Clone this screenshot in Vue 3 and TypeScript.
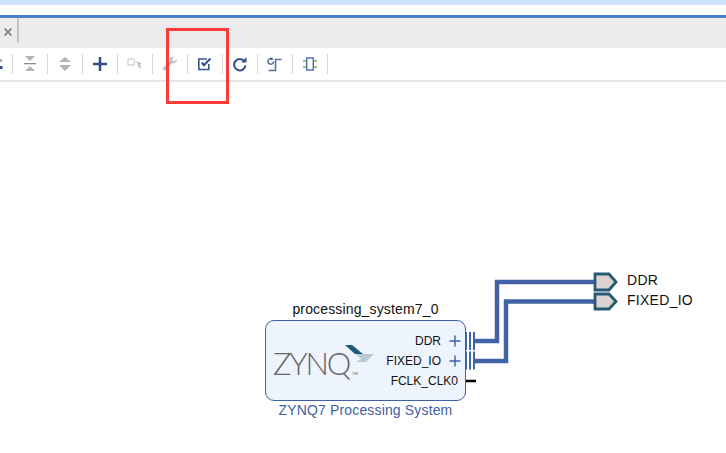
<script setup lang="ts">
</script>

<template>
  <div class="page">
    <div class="top-band"></div>
    <div class="top-gap"></div>
    <div class="accent"></div>
    <div class="tabbar">
      <div class="tab">
        <svg class="close" width="10" height="10" viewBox="0 0 10 10"><path d="M1.500 1.500l7 7M8.500 1.500l-7 7" stroke="#777" stroke-width="1.600" fill="none"/></svg>
      </div>
    </div>
    <div class="toolbar">
      <div class="btn first">
        <svg width="24" height="20" viewBox="0 0 24 20"><path d="M17 5h2v3h-2z" fill="#9fb0cc"/><path d="M17 12h2.500l0 3H17z" fill="#2e4f86"/></svg>
      </div>
      <div class="btn">
        <svg width="14" height="18" viewBox="0 0 14 18"><path d="M2 1h10L7 6zM7 11l5 5H2z" fill="#b4b4b4"/><path d="M1 8h12v1.300H1z" fill="#8d8d8d"/></svg>
      </div>
      <div class="btn">
        <svg width="14" height="18" viewBox="0 0 14 18"><path d="M7 2l6 5H1zM1 10h12L7 16z" fill="#b4b4b4"/></svg>
      </div>
      <div class="btn">
        <svg width="16" height="16" viewBox="0 0 16 16"><path d="M6.700 1h2.600v5.700h5.700v2.600H9.300V15H6.700V9.300H1V6.700h5.700z" fill="#2e4f86"/></svg>
      </div>
      <div class="btn">
        <svg width="16" height="14" viewBox="0 0 16 14"><rect x="1" y="2" width="6" height="6" fill="#fff" stroke="#c4c4c4"/><path d="M8 5h3" stroke="#ccc"/><path d="M10 5l5 1-2 1 1 4-2 0-1-3z" fill="#c0c0c0"/></svg>
      </div>
      <div class="btn">
        <svg width="16" height="16" viewBox="0 0 16 16"><path d="M15 3.500l-2.800 2-2-.8.200-2.400 1.800-1.300C9.900.4 8 1.300 7.800 3.100c-.1.800.1 1.300.3 1.800L1.500 11.200c-.8.800-.8 1.900-.1 2.600.8.800 1.800.6 2.500-.1l6-6.600c.6.200 1.100.3 1.800.2C13.700 7 15.100 5.500 15 3.500z" fill="#bdbdbd"/></svg>
      </div>
      <div class="btn">
        <svg width="16" height="14" viewBox="0 0 16 14"><path d="M10 2H1.800v10.500h10V7" fill="none" stroke="#3a568c" stroke-width="1.600"/><path d="M4.800 5.500l2.200 2.700L13.500 1.500" fill="none" stroke="#2e4f86" stroke-width="2"/></svg>
      </div>
      <div class="btn">
        <svg width="16" height="16" viewBox="0 0 16 16"><path d="M12.300 5.200A5.700 5.700 0 1 0 13.500 9.300" fill="none" stroke="#2e4f86" stroke-width="2"/><path d="M9.200 6.400h5.300V1z" fill="#2e4f86"/></svg>
      </div>
      <div class="btn">
        <svg width="16" height="16" viewBox="0 0 16 16"><path d="M1.500 14.500h7V3.500h6" fill="none" stroke="#5470a5" stroke-width="1.600"/><path d="M5.800 3.500A2.800 2.800 0 1 0 6.500 5.500" fill="none" stroke="#3d5a8f" stroke-width="1.300"/><path d="M3.600 1l2.600 2-2.600 1.500z" fill="#3d5a8f"/></svg>
      </div>
      <div class="btn">
        <svg width="16" height="14" viewBox="0 0 16 14"><path d="M1 4h14M1 10h14" stroke="#5cb66a" stroke-width="1.600"/><rect x="4.700" y="1" width="6.600" height="12" fill="#fff" stroke="#5470a5" stroke-width="1.400"/></svg>
      </div>
    </div>
    <div class="rule"></div>
    <div class="canvas">
      <svg class="wires" width="726" height="372" viewBox="0 81 726 372">
        <path d="M474 340H497V281H595" fill="none" stroke="#4163a5" stroke-width="4.500"/>
        <path d="M474 360H506V300.500H595" fill="none" stroke="#4163a5" stroke-width="4.500"/>
        <path d="M466 331v18M470 331v18M474 331v18M466 350.500v18M470 350.500v18M474 350.500v18" stroke="#3f66a6" stroke-width="2"/>
        <path d="M466 380h10" stroke="#000" stroke-width="2.500"/>
        <path d="M595 273h14l7 8-7 8h-14z" fill="#dbd3d0" stroke="#245a73" stroke-width="2.800"/>
        <path d="M595 293h14l7 7.500-7 7.500h-14z" fill="#dbd3d0" stroke="#245a73" stroke-width="2.800"/>
      </svg>
      <span class="ext-label ddr">DDR</span>
      <span class="ext-label fixed">FIXED_IO</span>
      <div class="ip">
        <div class="ip-name">processing_system7_0</div>
        <div class="ip-box">
          <div class="logo">
            <span class="logo-word">ZYNQ</span>
            <span class="tm">TM</span>
            <svg class="logo-mark" width="32" height="22" viewBox="0 0 32 22"><path d="M1 0h7l11 9h-8z" fill="#1f5a7a"/><path d="M12 9h18l-8 8H12l6-4h-2z" fill="#b9c9d3"/></svg>
          </div>
          <div class="pins">
            <div class="pin"><span>DDR</span><svg width="12" height="12" viewBox="0 0 12 12"><path d="M6 .5v11M.5 6h11" stroke="#3f60a3" stroke-width="1.400"/></svg></div>
            <div class="pin"><span>FIXED_IO</span><svg width="12" height="12" viewBox="0 0 12 12"><path d="M6 .5v11M.5 6h11" stroke="#3f60a3" stroke-width="1.400"/></svg></div>
            <div class="pin plain"><span>FCLK_CLK0</span></div>
          </div>
        </div>
        <div class="ip-title">ZYNQ7 Processing System</div>
      </div>
    </div>
    <div class="highlight"></div>
  </div>
</template>

<style>
html, body { margin: 0; background: #fff; overflow: hidden; }
</style>

<style scoped>
.page {
  position: relative;
  width: 726px;
  height: 453px;
  overflow: hidden;
  background: #fff;
  font-family: "Liberation Sans", Arial, sans-serif;
  display: flex;
  flex-direction: column;
}
.top-band { height: 5px; background: #cfe0fb; }
.top-gap { height: 10px; background: #fff; }
.accent { height: 3px; background: #4a7fcb; }
.tabbar { height: 30px; background: #ececec; display: flex; }
.tab {
  width: 17px;
  height: 25px;
  border-right: 2px solid #c4c4c4;
  display: flex;
  align-items: center;
  justify-content: flex-end;
}
.close { margin: 3px 4px 0 0; }
.toolbar {
  height: 32px;
  display: flex;
  margin-left: -22px;
  align-items: flex-start;
  padding-top: 6px;
  box-sizing: border-box;
}
.btn {
  width: 35px;
  height: 20px;
  flex: none;
  box-sizing: border-box;
  border-right: 1px solid #d8d8d8;
  display: flex;
  align-items: center;
  justify-content: center;
}
.rule { height: 2px; background: #e6e6e6; }
.canvas { position: relative; flex: 1; }
.wires { position: absolute; left: 0; top: 0; }
.ext-label {
  position: absolute;
  left: 627px;
  font-size: 14px;
  line-height: 15px;
  color: #111;
  letter-spacing: .28px;
}
.ddr { top: 191px; }
.fixed { top: 211px; }
.ip { position: absolute; left: 265px; top: 219px; width: 201px; }
.ip-name {
  text-align: center;
  font-size: 14px;
  line-height: 16px;
  height: 19px;
  color: #111;
  letter-spacing: .15px;
}
.ip-box {
  box-sizing: border-box;
  height: 81px;
  background: #eef4fd;
  border: 1px solid #3f60a3;
  border-radius: 9px;
  display: flex;
  justify-content: space-between;
}
.logo { position: relative; width: 100px; }
.logo-word {
  position: absolute;
  left: 7px;
  top: 24px;
  font-family: Lato, "Liberation Sans", sans-serif;
  font-weight: 300;
  font-size: 31px;
  line-height: 36px;
  color: #666;
  letter-spacing: -2.200px;
}
.tm { position: absolute; left: 86px; top: 51px; font-size: 4px; line-height: 4px; color: #666; }
.logo-mark { position: absolute; left: 78px; top: 24px; }
.pins { padding: 10px 4px 0 0; display: flex; flex-direction: column; }
.pin {
  height: 20px;
  display: flex;
  align-items: center;
  justify-content: flex-end;
  gap: 8px;
  font-size: 12px;
  color: #111;
}
.pin.plain { padding-right: 3px; }
.ip-title {
  text-align: center;
  font-size: 14px;
  line-height: 16px;
  color: #3f60a3;
  letter-spacing: .15px;
  margin-top: 1px;
}
.highlight {
  position: absolute;
  left: 166px;
  top: 28px;
  width: 63px;
  height: 76px;
  box-sizing: border-box;
  border: 3px solid #fc3a3a;
}
</style>
